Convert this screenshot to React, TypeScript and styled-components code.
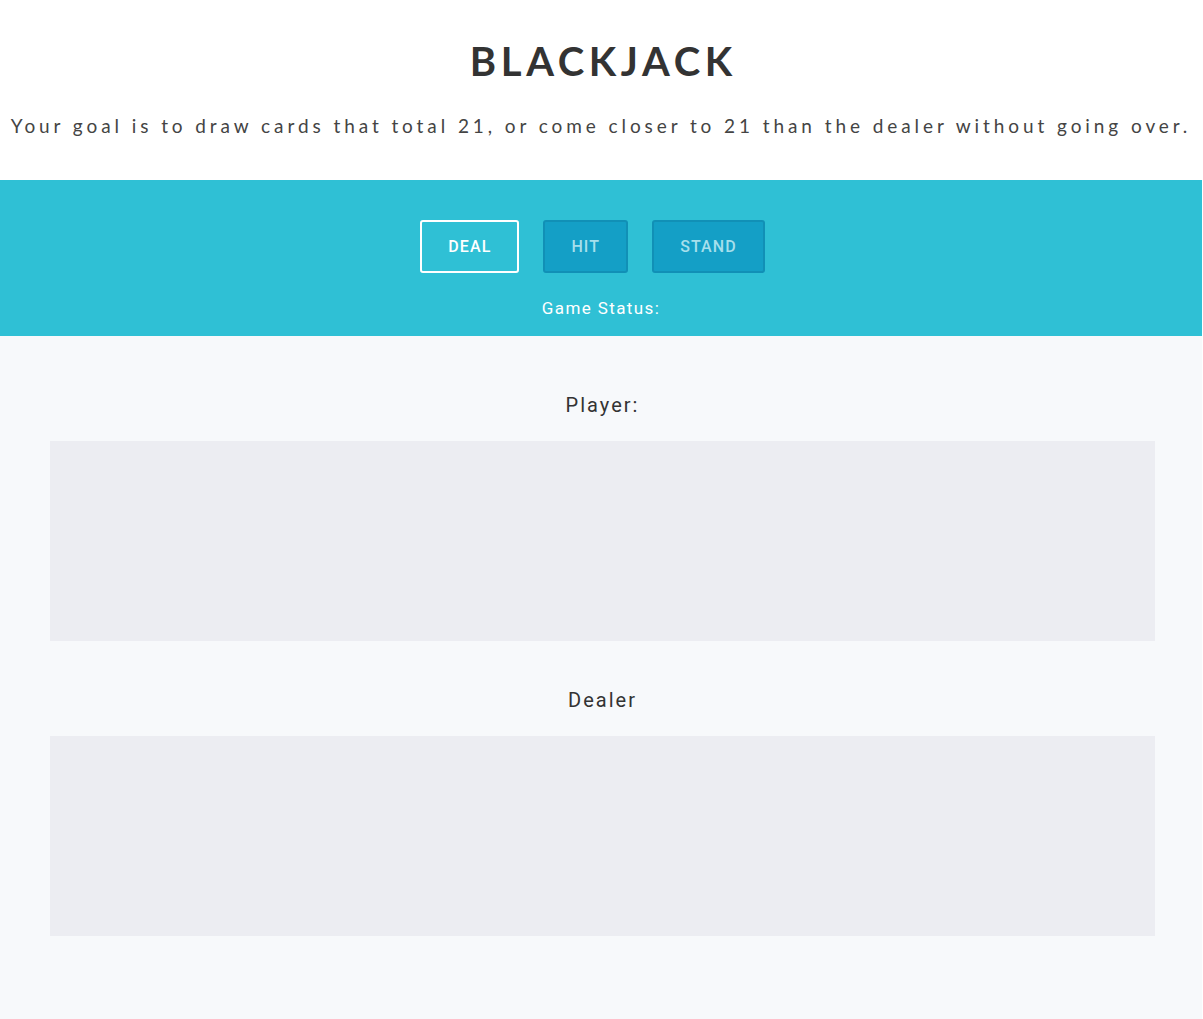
import React from "react";
import styled, { createGlobalStyle } from "styled-components";

const Global = createGlobalStyle`
  html, body { margin: 0; padding: 0; background: #ffffff; }
  body { font-family: "Lato", "Liberation Sans", sans-serif; }
  * { box-sizing: border-box; }
`;

const Page = styled.div`
  width: 1202px;
  min-height: 1019px;
  display: flex;
  flex-direction: column;
  background: #f7f9fb;
`;

const Header = styled.header`
  background: #ffffff;
  padding: 40px 0 42px;
  display: flex;
  flex-direction: column;
  align-items: center;
`;

const Title = styled.h1`
  margin: 0;
  font-family: "Lato", "Liberation Sans", sans-serif;
  font-weight: 700;
  font-size: 40px;
  line-height: 42px;
  letter-spacing: 4.6px;
  margin-right: -4.6px;
  color: #333333;
`;

const Subtitle = styled.p`
  margin: 32px 0 0;
  font-family: "Lato", "Liberation Sans", sans-serif;
  font-weight: 400;
  font-size: 19px;
  line-height: 24px;
  letter-spacing: 3.92px;
  color: #444444;
  white-space: nowrap;
`;

const Controls = styled.section`
  background: #2fc0d5;
  height: 156px;
  padding-top: 40px;
  display: flex;
  flex-direction: column;
  align-items: center;
`;

const ButtonRow = styled.div`
  display: flex;
  gap: 24px;
  padding-right: 17px;
`;

const Button = styled.button<{ $primary?: boolean }>`
  height: 53px;
  padding: 0 26px;
  border-radius: 3px;
  font-family: "Roboto", "Liberation Sans", sans-serif;
  font-weight: 500;
  font-size: 16px;
  letter-spacing: 1.1px;
  cursor: pointer;
  border: 2px solid ${(p) => (p.$primary ? "#ffffff" : "#1190b6")};
  background: ${(p) => (p.$primary ? "transparent" : "#149fc6")};
  color: ${(p) => (p.$primary ? "#ffffff" : "#a6dfec")};
`;

const Status = styled.div`
  margin-top: 25px;
  font-family: "Roboto", "Liberation Sans", sans-serif;
  font-weight: 400;
  font-size: 17px;
  letter-spacing: 1.4px;
  color: #ffffff;
`;

const Table = styled.main`
  flex: 1;
  background: #f7f9fb;
  padding: 56px 47px 83px 50px;
  display: flex;
  flex-direction: column;
`;

const Label = styled.h2`
  margin: 0 0 22px;
  text-align: center;
  font-family: "Roboto", "Liberation Sans", sans-serif;
  font-weight: 400;
  font-size: 20px;
  line-height: 27px;
  letter-spacing: 2px;
  color: #333333;
`;

const Hand = styled.div<{ $last?: boolean }>`
  height: 200px;
  background: #ecedf2;
  margin-bottom: ${(p) => (p.$last ? "0" : "46px")};
`;

export default function App() {
  return (
    <>
      <Global />
      <Page>
        <Header>
          <Title>BLACKJACK</Title>
          <Subtitle>
            Your goal is to draw cards that total 21, or come closer to 21 than the dealer without going over.
          </Subtitle>
        </Header>
        <Controls>
          <ButtonRow>
            <Button $primary>DEAL</Button>
            <Button>HIT</Button>
            <Button>STAND</Button>
          </ButtonRow>
          <Status>Game Status:</Status>
        </Controls>
        <Table>
          <Label>Player:</Label>
          <Hand />
          <Label>Dealer</Label>
          <Hand $last />
        </Table>
      </Page>
    </>
  );
}
